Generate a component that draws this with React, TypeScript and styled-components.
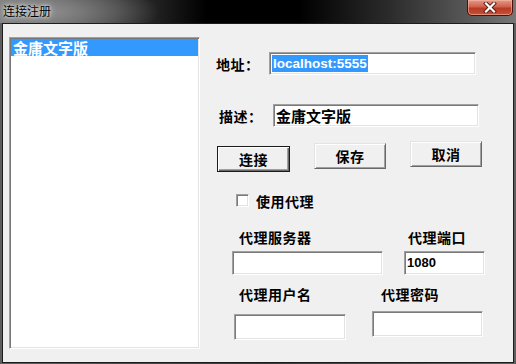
import styled, { createGlobalStyle } from "styled-components";

const GlobalStyle = createGlobalStyle`
  html, body {
    margin: 0;
    padding: 0;
    background: #6a6a6a;
  }
  * {
    box-sizing: border-box;
  }
`;

const cjk = `"Noto Sans CJK SC", "Noto Sans", sans-serif`;

const Window = styled.div`
  width: 516px;
  height: 364px;
  display: flex;
  flex-direction: column;
  background: linear-gradient(to right, #5e5e5e, #3a3a3a 50%, #5e5e5e);
  overflow: hidden;
`;

const TitleBar = styled.div`
  height: 23px;
  flex: none;
  display: flex;
  align-items: flex-start;
  justify-content: space-between;
  background:
    radial-gradient(ellipse 120px 30px at 40px 12px, rgba(150, 150, 150, 0.9), rgba(150, 150, 150, 0) 100%),
    linear-gradient(to right, #747474 0%, #3c3c3c 22%, #000 40%, #000 58%, #2a2a2a 75%, #5c5c5c 92%, #777 100%);
`;

const Title = styled.span`
  font-family: ${cjk};
  font-size: 12px;
  line-height: 14px;
  margin: 4px 0 0 3px;
  color: #000;
  text-shadow: 0 0 6px rgba(255, 255, 255, 0.9), 0 0 3px rgba(255, 255, 255, 0.8);
`;

const CloseButton = styled.div`
  width: 46px;
  height: 16px;
  margin-right: 3px;
  display: flex;
  align-items: center;
  justify-content: center;
  border: 1px solid #4a120a;
  border-top: none;
  border-radius: 0 0 5px 5px;
  background: linear-gradient(to bottom, #e39a8c 0%, #d0604c 45%, #b93a24 55%, #c4513a 100%);
  box-shadow: inset 0 0 0 1px rgba(255, 190, 170, 0.55);
`;

const Client = styled.div`
  flex: 1;
  margin: 0 2px 1px 2px;
  border: 1px solid #1c1c1c;
  background: #f0f0f0;
  display: flex;
`;

const ListBox = styled.div`
  width: 191px;
  height: 312px;
  margin: 13px 0 0 6px;
  background: #fff;
  border: 1px solid;
  border-color: #a0a0a0 #fff #fff #a0a0a0;
  box-shadow: inset 1px 1px 0 #787878, inset -1px -1px 0 #e3e3e3;
  padding: 1px 1px 0 1px;
`;

const ListItem = styled.div<{ $selected?: boolean }>`
  height: 17px;
  padding-left: 2px;
  font-family: ${cjk};
  font-weight: 700;
  font-size: 15px;
  line-height: 17px;
  color: ${(p) => (p.$selected ? "#fff" : "#000")};
  background: ${(p) => (p.$selected ? "#3399ff" : "transparent")};
`;

const Pane = styled.div`
  flex: 1;
  display: flex;
  flex-direction: column;
`;

const Row = styled.div<{ $top: number; $indent: number; $h?: number; $align?: string }>`
  display: flex;
  align-items: ${(p) => p.$align ?? "center"};
  margin-top: ${(p) => p.$top}px;
  padding-left: ${(p) => p.$indent}px;
  height: ${(p) => (p.$h ? `${p.$h}px` : "auto")};
`;

const Label = styled.span<{ $w?: number; $ml?: number }>`
  font-family: ${cjk};
  font-weight: 700;
  font-size: 14px;
  letter-spacing: 0.5px;
  line-height: 16px;
  color: #000;
  white-space: nowrap;
  width: ${(p) => (p.$w ? `${p.$w}px` : "auto")};
  margin-left: ${(p) => p.$ml ?? 0}px;
  flex: none;
`;

const Field = styled.div<{ $w: number; $h: number; $ml?: number; $mt?: number }>`
  width: ${(p) => p.$w}px;
  height: ${(p) => p.$h}px;
  margin-left: ${(p) => p.$ml ?? 0}px;
  margin-top: ${(p) => p.$mt ?? 0}px;
  flex: none;
  background: #fff;
  border: 1px solid;
  border-color: #a0a0a0 #fff #fff #a0a0a0;
  box-shadow: inset 1px 1px 0 #7a7a7a, inset -1px -1px 0 #e3e3e3;
  display: flex;
  align-items: center;
  padding-left: 2px;
`;

const FieldText = styled.span<{ $cjk?: boolean }>`
  font-family: ${(p) => (p.$cjk ? cjk : `"Liberation Sans", Arial, sans-serif`)};
  font-weight: 700;
  font-size: ${(p) => (p.$cjk ? 15 : 13)}px;
  line-height: 16px;
  color: #000;
  white-space: nowrap;
`;

const Selection = styled.span`
  font-family: "Liberation Sans", Arial, sans-serif;
  font-weight: 700;
  font-size: 13.5px;
  line-height: 17px;
  color: #fff;
  background: #3399ff;
  padding: 0 1px;
`;

const Button = styled.div<{ $w: number; $ml: number; $mt: number; $default?: boolean }>`
  width: ${(p) => p.$w}px;
  height: 26px;
  margin-left: ${(p) => p.$ml}px;
  margin-top: ${(p) => p.$mt}px;
  flex: none;
  display: flex;
  align-items: center;
  justify-content: center;
  font-family: ${cjk};
  font-weight: 700;
  font-size: 14px;
  letter-spacing: 0.5px;
  color: #000;
  background: #f0f0f0;
  border: 1px solid;
  border-color: ${(p) => (p.$default ? "#1a1a1a" : "#e3e3e3 #696969 #696969 #e3e3e3")};
  box-shadow: ${(p) =>
    p.$default
      ? "inset 1px 1px 0 #fff, inset -1px -1px 0 #696969, inset -2px -2px 0 #a0a0a0"
      : "inset 1px 1px 0 #fff, inset -1px -1px 0 #a0a0a0"};
`;

const CheckBox = styled.div`
  width: 13px;
  height: 13px;
  flex: none;
  background: #fff;
  border: 1px solid;
  border-color: #a0a0a0 #fff #fff #a0a0a0;
  box-shadow: inset 1px 1px 0 #7a7a7a, inset -1px -1px 0 #e3e3e3;
  margin-right: 7px;
`;

export default function App() {
  return (
    <>
      <GlobalStyle />
      <Window>
        <TitleBar>
          <Title>连接注册</Title>
          <CloseButton>
            <svg width="14" height="11" viewBox="0 0 14 11">
              <path d="M3 1.5 L11 9.5 M11 1.5 L3 9.5" stroke="#5a1a10" strokeWidth="4" strokeLinecap="square" />
              <path d="M3 1.5 L11 9.5 M11 1.5 L3 9.5" stroke="#fff" strokeWidth="2.2" strokeLinecap="square" />
            </svg>
          </CloseButton>
        </TitleBar>
        <Client>
          <ListBox>
            <ListItem $selected>金庸文字版</ListItem>
          </ListBox>
          <Pane>
            <Row $top={28} $indent={16} $h={23}>
              <Label $w={53}>地址：</Label>
              <Field $w={207} $h={23}>
                <Selection>localhost:5555</Selection>
              </Field>
            </Row>
            <Row $top={29} $indent={19} $h={23}>
              <Label $w={54}>描述：</Label>
              <Field $w={206} $h={23}>
                <FieldText $cjk>金庸文字版</FieldText>
              </Field>
            </Row>
            <Row $top={14} $indent={0} $h={31} $align="flex-start">
              <Button $w={73} $ml={17} $mt={5} $default>连接</Button>
              <Button $w={72} $ml={24} $mt={2}>保存</Button>
              <Button $w={72} $ml={24} $mt={0}>取消</Button>
            </Row>
            <Row $top={20} $indent={36} $h={17}>
              <CheckBox />
              <Label>使用代理</Label>
            </Row>
            <Row $top={20} $indent={39} $h={16}>
              <Label $w={169}>代理服务器</Label>
              <Label>代理端口</Label>
            </Row>
            <Row $top={6} $indent={32} $align="flex-start">
              <Field $w={151} $h={24} />
              <Field $w={81} $h={24} $ml={21}>
                <FieldText>1080</FieldText>
              </Field>
            </Row>
            <Row $top={11} $indent={39} $h={16}>
              <Label $w={142}>代理用户名</Label>
              <Label>代理密码</Label>
            </Row>
            <Row $top={9} $indent={34} $align="flex-start">
              <Field $w={112} $h={26} $mt={3} />
              <Field $w={111} $h={26} $ml={26} />
            </Row>
          </Pane>
        </Client>
      </Window>
    </>
  );
}
